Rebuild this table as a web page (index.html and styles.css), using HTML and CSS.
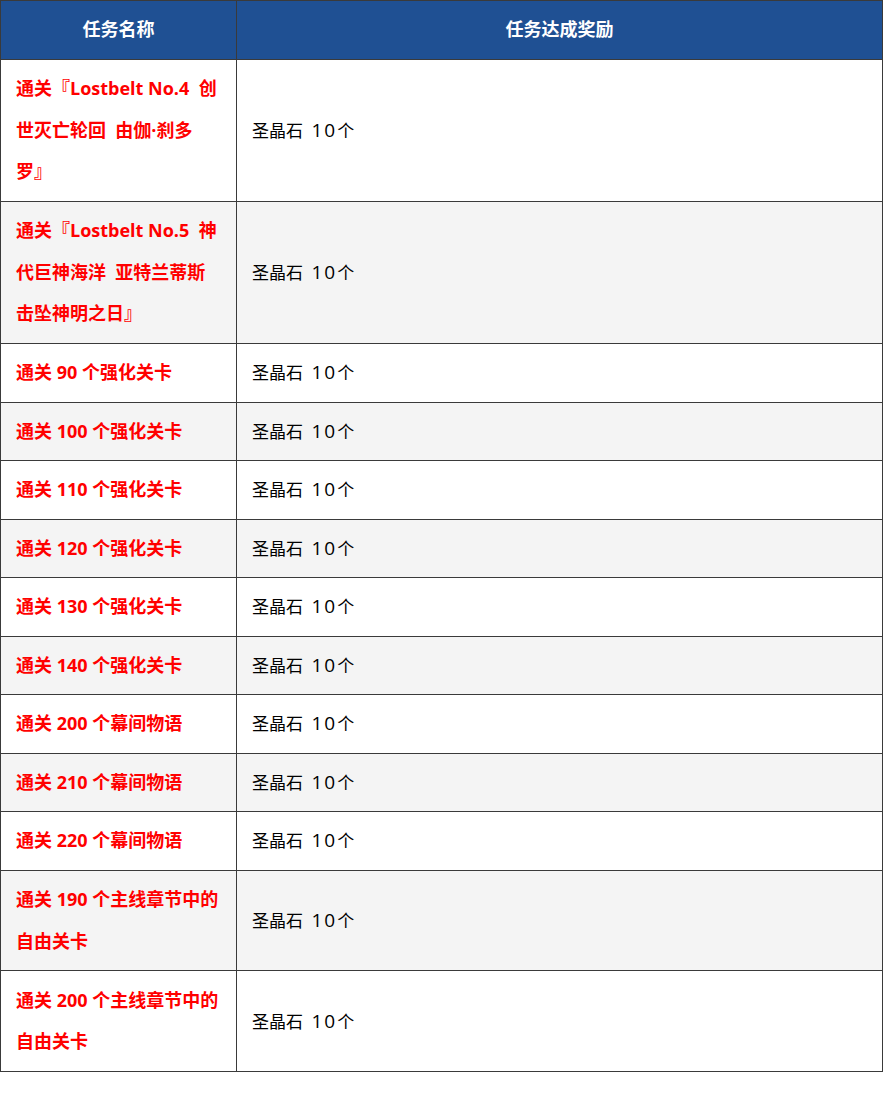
FILE: index.html
```html
<!DOCTYPE html>
<html lang="zh">
<head>
<meta charset="utf-8">
<link rel="stylesheet" href="styles.css">
</head>
<body>
<table class="quest">
  <thead>
    <tr><th class="c1">任务名称</th><th class="c2">任务达成奖励</th></tr>
  </thead>
  <tbody>
    <tr class="tall"><td class="name">通关『Lostbelt No.4&nbsp; 创<br>世灭亡轮回&nbsp; 由伽·刹多<br>罗』</td><td class="reward">圣晶石 <span class="num">10</span>个</td></tr>
    <tr class="alt tall"><td class="name">通关『Lostbelt No.5&nbsp; 神<br>代巨神海洋&nbsp; 亚特兰蒂斯<br>击坠神明之日』</td><td class="reward">圣晶石 <span class="num">10</span>个</td></tr>
    <tr><td class="name">通关 90 个强化关卡</td><td class="reward">圣晶石 <span class="num">10</span>个</td></tr>
    <tr class="alt"><td class="name">通关 100 个强化关卡</td><td class="reward">圣晶石 <span class="num">10</span>个</td></tr>
    <tr><td class="name">通关 110 个强化关卡</td><td class="reward">圣晶石 <span class="num">10</span>个</td></tr>
    <tr class="alt"><td class="name">通关 120 个强化关卡</td><td class="reward">圣晶石 <span class="num">10</span>个</td></tr>
    <tr><td class="name">通关 130 个强化关卡</td><td class="reward">圣晶石 <span class="num">10</span>个</td></tr>
    <tr class="alt"><td class="name">通关 140 个强化关卡</td><td class="reward">圣晶石 <span class="num">10</span>个</td></tr>
    <tr><td class="name">通关 200 个幕间物语</td><td class="reward">圣晶石 <span class="num">10</span>个</td></tr>
    <tr class="alt"><td class="name">通关 210 个幕间物语</td><td class="reward">圣晶石 <span class="num">10</span>个</td></tr>
    <tr><td class="name">通关 220 个幕间物语</td><td class="reward">圣晶石 <span class="num">10</span>个</td></tr>
    <tr class="alt tall"><td class="name">通关 190 个主线章节中的<br>自由关卡</td><td class="reward">圣晶石 <span class="num">10</span>个</td></tr>
    <tr class="tall"><td class="name">通关 200 个主线章节中的<br>自由关卡</td><td class="reward">圣晶石 <span class="num">10</span>个</td></tr>
  </tbody>
</table>
</body>
</html>
```
FILE: styles.css
```css
html, body {
  margin: 0;
  padding: 0;
  background: #ffffff;
}

.quest {
  width: 883px;
  border-collapse: collapse;
  table-layout: fixed;
  font-family: "Open Sans", "Noto Sans CJK SC", sans-serif;
  font-size: 17px;
}

.quest th,
.quest td {
  border: 1px solid #3a3a3a;
  padding: 8px 15px;
  line-height: 41.5px;
  vertical-align: middle;
}

.quest .tall td {
  line-height: 41.6px;
  padding-top: 8.5px;
  padding-bottom: 8px;
}

.quest th {
  height: 41px;
  color: #ffffff;
  font-weight: bold;
  font-size: 18px;
  text-align: center;
  background-color: #1f4f8e;
  background-image: conic-gradient(#123c74 25%, #2b65b2 0 50%, #123c74 0 75%, #2b65b2 0);
  background-size: 2px 2px;
}

.quest .c1 {
  width: 205px;
}

.name {
  color: #ff0000;
  font-weight: bold;
  text-align: left;
  font-size: 18px;
}

.reward {
  color: #000000;
  font-weight: normal;
  padding-left: 12px;
}

.num {
  font-size: 19px;
  letter-spacing: 2px;
  padding-left: 4px;
}

.alt td {
  background-color: #ffffff;
  background-image: conic-gradient(#d4d4d4 25%, transparent 0);
  background-size: 2px 2px;
}
```
